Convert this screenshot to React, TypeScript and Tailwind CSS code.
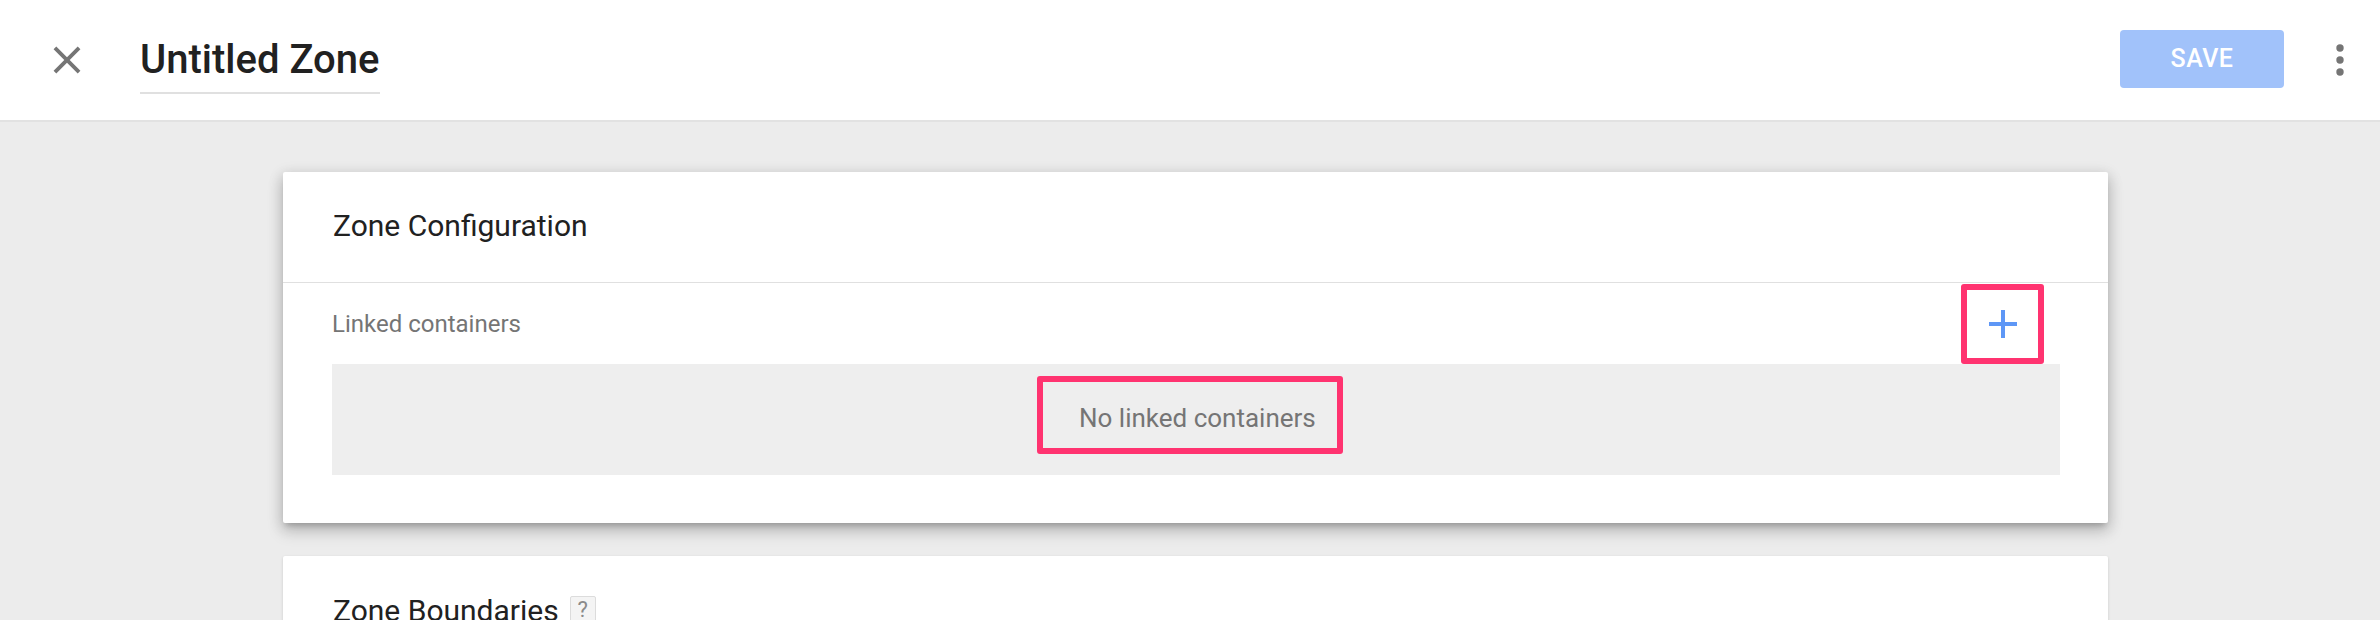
import React from "react";

/**
 * 区域编辑页：顶部工具栏 + 区域配置卡片
 */
const font = { fontFamily: "Roboto, 'Liberation Sans', sans-serif" };

function CloseIcon() {
  return (
    <svg viewBox="0 0 24 24" className="w-[46px] h-[46px]" fill="#757575">
      <path d="M19 6.41L17.59 5 12 10.59 6.41 5 5 6.41 10.59 12 5 17.59 6.41 19 12 13.41 17.59 19 19 17.59 13.41 12z" />
    </svg>
  );
}

function MoreIcon() {
  return (
    <svg viewBox="0 0 24 24" className="w-[48px] h-[48px]" fill="#757575">
      <circle cx="12" cy="6" r="1.85" />
      <circle cx="12" cy="12" r="1.85" />
      <circle cx="12" cy="18" r="1.85" />
    </svg>
  );
}

function AddIcon() {
  return (
    <svg viewBox="0 0 24 24" className="w-[48px] h-[48px]" fill="#5e97f6">
      <path d="M19 13h-6v6h-2v-6H5v-2h6V5h2v6h6v2z" />
    </svg>
  );
}

function Header() {
  return (
    <header className="h-[122px] w-full bg-white border-b-2 border-[#e2e2e2] flex items-start">
      <div className="ml-[44px] mt-[37px] cursor-pointer">
        <CloseIcon />
      </div>
      <div className="ml-[50px] mt-[36px] w-[240px] border-b-2 border-[#e0e0e0] pb-[8px]">
        <h1 className="text-[40px] leading-[48px] font-medium text-[#212121] whitespace-nowrap">Untitled Zone</h1>
      </div>
      <div className="ml-auto mt-[30px] flex items-start">
        <button className="w-[164px] h-[58px] rounded-[4px] bg-[#a1c2fa] text-white text-[25px] font-medium tracking-[0.5px]">
          SAVE
        </button>
        <div className="ml-[32px] mr-[16px] mt-[6px]">
          <MoreIcon />
        </div>
      </div>
    </header>
  );
}

function CardTitle({ children, divider }: { children: React.ReactNode; divider?: boolean }) {
  return (
    <div
      className={`h-[111px] flex items-center pl-[50px] pb-[2px] ${divider ? "border-b border-[#e0e0e0]" : ""}`}
    >
      {children}
    </div>
  );
}

export default function App() {
  return (
    <div style={font} className="h-[620px] w-[2380px] overflow-hidden bg-[#ececec]">
      <Header />
      <main className="pl-[283px] pt-[50px] flex flex-col gap-[33px]">
        <section className="w-[1825px] bg-white rounded-[2px] shadow-[0_8px_16px_1px_rgba(0,0,0,0.16),0_3px_14px_2px_rgba(0,0,0,0.1),0_5px_6px_-3px_rgba(0,0,0,0.2)]">
          <CardTitle divider>
            <h2 className="text-[30px] leading-[36px] text-[#212121]">Zone Configuration</h2>
          </CardTitle>
          <div className="pl-[49px] pr-[48px] pb-[48px]">
            <div className="h-[81px] flex items-center justify-between">
              <span className="text-[24px] text-[#757575]">Linked containers</span>
              <div className="mr-[16px] w-[83px] h-[80px] border-[6px] border-[#ff3370] rounded-[3px] flex items-center justify-center">
                <AddIcon />
              </div>
            </div>
            <div className="h-[111px] bg-[#eeeeee] flex justify-center pt-[12px]">
              <div className="mr-[12px] w-[306px] h-[78px] border-[6px] border-[#ff3370] rounded-[3px] flex items-center pl-[36px] pt-[6px]">
                <span className="text-[26px] text-[#757575] whitespace-nowrap">No linked containers</span>
              </div>
            </div>
          </div>
        </section>

        <section className="w-[1825px] h-[240px] bg-white rounded-[2px] shadow-[0_1px_3px_rgba(0,0,0,0.14)]">
          <CardTitle>
            <h2 className="text-[30px] leading-[36px] text-[#212121]">Zone Boundaries</h2>
            <span className="ml-[11px] w-[26px] h-[27px] mt-[-2px] border border-[#dcdcdc] bg-[#f4f4f4] rounded-[2px] flex items-center justify-center text-[22px] text-[#8a8a8a]">
              ?
            </span>
          </CardTitle>
        </section>
      </main>
    </div>
  );
}
